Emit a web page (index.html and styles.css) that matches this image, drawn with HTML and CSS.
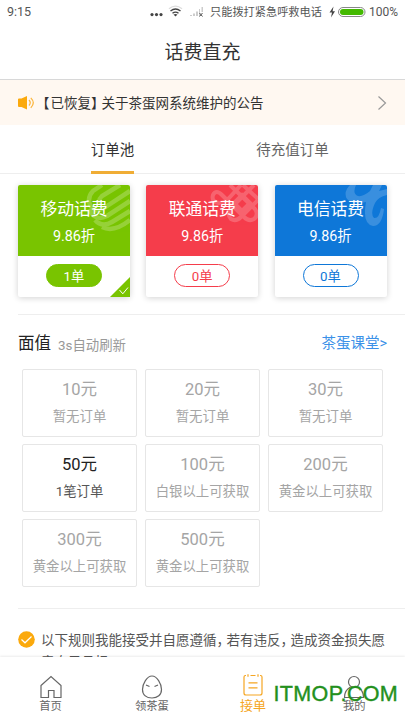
FILE: index.html
```html
<!DOCTYPE html>
<html lang="zh-CN">
<head>
<meta charset="utf-8">
<title>话费直充</title>
<link rel="stylesheet" href="styles.css">
</head>
<body>
<div class="app">
  <div class="status">
    <span class="time">9:15</span>
    <svg class="signals" width="62" height="16" viewBox="0 0 62 16">
      <g fill="#444"><circle cx="3" cy="10.6" r="1.6"/><circle cx="7.500" cy="10.6" r="1.6"/><circle cx="12" cy="10.6" r="1.6"/></g>
      <g fill="none" stroke-width="1.4"><path d="M20 4.800Q26.500 -.5 33 4.800" stroke="#ddd"/><path d="M21.500 7Q26.500 3 31.500 7M23.500 9.300Q26.500 7 29.500 9.300" stroke="#444"/></g>
      <path d="M24.500 10.500Q26.500 9.300 28.500 10.500L26.500 12.500Z" fill="#444"/>
      <g fill="#ccc"><path d="M41 12v-1h2v1zM44 12V9.500h2V12zM47 12V7.500h2V12zM50 12V5h1v7zM52.500 8V3H54v5z"/></g>
      <path d="M50.500 9l3 3.500m0-3.500l-3 3.500" stroke="#555"/>
    </svg>
    <span class="carrier">只能拨打紧急呼救电话</span>
    <svg class="battery" width="37" height="14" viewBox="0 0 37 14">
      <path d="M4.500 1.500L.5 7.500H3L2 12.500L6 6.200H3.600Z" fill="#444"/>
      <rect x="9.500" y="2.500" width="26.500" height="9" rx="4.500" fill="#fff" stroke="#888"/>
      <rect x="11" y="4" width="23.500" height="6" rx="3" fill="#43b900"/>
    </svg>
    <span class="percent">100%</span>
  </div>
  <h1 class="title">话费直充</h1>
  <div class="notice">
    <svg width="17" height="16" viewBox="0 0 17 16"><path d="M0 4.500Q0 3.500 1 3.500H3.500L9 1V14.500L3.500 12H1Q0 12 0 11z" fill="#fba90c"/><path d="M11 5q2.500 2.700 0 5.500M12.800 2.800q5 5 0 10" fill="none" stroke="#fbb43a" stroke-width="1.200"/></svg>
    <span class="notice-text"><span class="open">【</span>已恢复<span class="close">】</span>关于茶蛋网系统维护的公告</span>
    <svg width="10" height="16" viewBox="0 0 10 16"><path d="M1.500 1.500L8.500 8L1.500 14.500" fill="none" stroke="#999" stroke-width="1.200"/></svg>
  </div>
  <div class="tabs">
    <div class="tab active"><span>订单池</span></div>
    <div class="tab pending"><span>待充值订单</span></div>
  </div>
  <div class="carriers">
    <div class="card green selected">
      <div class="card-top">
        <svg class="logo" width="46" height="47" viewBox="0 0 46 47"><g fill="none" stroke="#fff" opacity=".22" stroke-width="4.500"><path d="M18 0L9 6Q3 12 6 20Q11 29 20 23L46 6"/><path d="M36 0L18 11Q13 16 18 18"/><path d="M5 24Q11 37 23 31L46 16"/><path d="M11 35Q18 43 28 37L46 26"/><path d="M18 42Q30 48 46 35"/></g></svg>
        <div class="name">移动话费</div><div class="rate">9.86折</div>
      </div>
      <div class="card-bottom"><span class="pill">1单</span></div>
      <svg class="corner" width="20" height="20" viewBox="0 0 20 20"><path d="M20 0V20H0z" fill="#79c400"/><path d="M9.500 13l3.300 3.800L18 10.500" fill="none" stroke="#fff"/></svg>
    </div>
    <div class="card red">
      <div class="card-top">
        <svg class="logo" width="48" height="40" viewBox="0 0 48 40"><g fill="none" stroke="#fff" opacity=".2" stroke-width="4"><path d="M20 0L45 24Q49 30 44 34Q39 37 34 32L12 10Q6 4 3 10Q1 17 9 18Q15 18 20 12L31 0"/><path d="M44 0L20 24Q17 30 21 34Q26 37 31 32L48 15"/><path d="M33 0L48 14M24 18L32 26L40 18L32 10Z"/></g></svg>
        <div class="name">联通话费</div><div class="rate">9.86折</div>
      </div>
      <div class="card-bottom"><span class="pill">0单</span></div>
    </div>
    <div class="card blue">
      <div class="card-top">
        <svg class="logo" width="42" height="42" viewBox="0 0 42 42"><path d="M11 0Q7 9 13 11Q18 12 25 6L28 0H37L34 6L42 4V10Q33 12 30 18Q25 29 29 33Q34 34 36 23L39 24Q37 41 28 41Q17 39 21 17Q8 20 2 14Q-2 7 5 0Z" fill="#fff" fill-opacity=".18"/></svg>
        <div class="name">电信话费</div><div class="rate">9.86折</div>
      </div>
      <div class="card-bottom"><span class="pill">0单</span></div>
    </div>
  </div>
  <div class="section">
    <div class="section-head"><h2>面值</h2><span class="refresh">3s自动刷新</span><span class="class-link">茶蛋课堂&gt;</span></div>
    <div class="grid">
      <div class="value"><b>10元</b><span>暂无订单</span></div>
      <div class="value"><b>20元</b><span>暂无订单</span></div>
      <div class="value"><b>30元</b><span>暂无订单</span></div>
      <div class="value on"><b>50元</b><span>1笔订单</span></div>
      <div class="value"><b>100元</b><span>白银以上可获取</span></div>
      <div class="value"><b>200元</b><span>黄金以上可获取</span></div>
      <div class="value"><b>300元</b><span>黄金以上可获取</span></div>
      <div class="value"><b>500元</b><span>黄金以上可获取</span></div>
    </div>
  </div>
  <div class="rules">
    <svg width="17" height="17" viewBox="0 0 17 17"><circle cx="8.500" cy="8.500" r="8.300" fill="#fba90c"/><path d="M3.500 8.500l3.500 3.300L13.500 5.500" fill="none" stroke="#fff" stroke-width="1.200"/></svg>
    <p>以下规则我能接受并自愿遵循<span class="comma">，</span>若有违反<span class="comma">，</span>造成资金损失愿<br>意自己承担</p>
  </div>
  <nav class="nav">
    <div class="item"><svg width="24" height="24" viewBox="0 0 24 24"><path d="M2 10.500L12 1.500L22 10.500V22.500H15V15.500H9.500V22.500H2Z"/></svg><span>首页</span></div>
    <div class="item"><svg width="24" height="24" viewBox="0 0 24 24"><path d="M12 1C7 1 2.500 9 2.500 14.500C2.500 20 6.500 23 12 23S21.500 20 21.500 14.500C21.500 9 17 1 12 1ZM6 10l3.500 1.500M18 10l-3.500 1.500"/></svg><span>领茶蛋</span></div>
    <div class="item current"><svg width="24" height="24" viewBox="0 0 24 24"><path d="M5 2.500H4.500Q3 2.500 3 4V20Q3 22 5 22H19Q21 22 21 20V4Q21 2.500 19.500 2.500H19M9.500 2.500H14.500M7.500 9.800H16.500M7.500 14.800H16.500M7 1.200v2.600M17 1.200v2.600"/></svg><span>接单</span></div>
    <div class="item"><svg width="24" height="24" viewBox="0 0 24 24"><circle cx="12" cy="7" r="5.500"/><path d="M8.500 12Q2.500 15 2.500 22.500H21.500Q21.500 15 15.500 12"/></svg><span>我的</span></div>
    <div class="watermark">ITMOP.COM</div>
  </nav>
</div>
</body>
</html>
```
FILE: styles.css
```css
* { box-sizing: border-box; }
body { margin: 0; background: #fff; font-family: Roboto, "Noto Sans CJK SC", sans-serif; color: #333; }
.app { width: 405px; height: 720px; overflow: hidden; display: flex; flex-direction: column; position: relative; }
.app > * { flex-shrink: 0; }
svg { display: block; flex-shrink: 0; }
.status { height: 24px; display: flex; align-items: center; padding-left: 7px; color: #555; white-space: nowrap; }
.time { width: 142px; font-size: 12.500px; }
.carrier { width: 119px; font-size: 11.200px; margin-left: -1px; margin-top: -2px; }
.time { margin-top: -1px; }
.battery { margin: -1px 3px 0 0; }
.percent { font-size: 12px; }
.title { margin: 0; height: 56px; line-height: 57px; border-bottom: 1px solid #d8d8d8; text-align: center; font-size: 19px; font-weight: 400; }
.notice { height: 45px; background: #fff8f1; display: flex; align-items: center; padding: 0 18px; }
.notice-text { flex: 1; font-size: 13.500px; margin: -2px 0 0 1px; }
.open { margin-right: 1px; }
.close { margin-right: -3px; }
.tabs { height: 49px; border-bottom: 1px solid #eee; display: flex; font-size: 14.500px; }
.tab { width: 225px; display: flex; justify-content: center; line-height: 51px; }
.tab span { height: 49px; }
.tab.active span { border-bottom: 3px solid #f0ad35; }
.tab.pending { width: 135px; color: #666; }
.carriers { display: flex; gap: 16.250px; padding: 11px 18px 0; height: 140px; }
.card { width: 112px; height: 112px; border-radius: 2px; position: relative; box-shadow: 0 1px 6px rgba(0,0,0,.18); }
.card-top { height: 70.500px; border-radius: 2px 2px 0 0; color: #fff; text-align: center; background: var(--c); position: relative; padding-top: 11px; overflow: hidden; }
.green { --c: #79c400; }
.red { --c: #f53d4b; }
.blue { --c: #0e77d8; }
.logo { position: absolute; right: 0; top: 0; }
.name { font-size: 16.800px; line-height: 26px; position: relative; }
.rate { font-size: 14.300px; line-height: 29px; position: relative; }
.card-bottom { display: flex; justify-content: center; padding-top: 8.500px; }
.pill { width: 56px; height: 23px; border: 1px solid var(--c); border-radius: 12px; color: var(--c); text-align: center; font-size: 13.300px; line-height: 23px; }
.selected .pill { background: var(--c); color: #fff; }
.corner { position: absolute; right: 0; bottom: 0; }
.section { margin-left: 18px; border-top: 1px solid #eee; height: 294px; }
.section-head { display: flex; align-items: baseline; height: 54px; padding: 17px 18px 0 0; }
h2 { margin: 0; font-size: 16.500px; font-weight: 400; line-height: 24px; color: #222; }
.refresh { font-size: 13.400px; color: #999; margin-left: 7px; position: relative; top: 1px; }
.class-link { margin-left: auto; font-size: 14.500px; color: #3b91e8; position: relative; top: -1px; }
.grid { display: grid; grid-template-columns: repeat(3, 115px); gap: 7px 8px; padding-left: 4px; }
.value { height: 68px; border: 1px solid #e6e6e6; border-radius: 2px; text-align: center; color: #a5a5a5; padding-top: 8px; }
.value b { display: block; font-size: 16.500px; line-height: 24px; font-weight: 400; }
.value span { display: block; font-size: 13.400px; line-height: 30px; white-space: nowrap; }
.value.on b { color: #222; }
.value.on span { color: #555; }
.rules { display: flex; height: 49px; overflow: hidden; margin-left: 18px; border-top: 1px solid #eee; padding-top: 23px; color: #555; }
.rules svg { margin-top: -1px; }
.rules p { margin: -3px 0 0 6px; font-size: 13.500px; line-height: 22px; white-space: nowrap; }
.comma { margin-right: -3.500px; }
.nav { height: 63px; background: #fff; box-shadow: 0 -1px 2px rgba(0,0,0,.08); display: flex; position: relative; color: #666; }
.item { width: 101.250px; padding-top: 18px; display: flex; flex-direction: column; align-items: center; font-size: 11.300px; line-height: 16px; }
.item svg { fill: none; stroke: #666; stroke-width: 1.200; }
.current { color: #f5a623; font-size: 13px; padding-top: 16px; line-height: 18px; }
.current svg { stroke: #f5a623; }
.watermark { position: absolute; left: 273.500px; top: 25px; font: 21.500px/25px "Liberation Sans", sans-serif; letter-spacing: .35px; color: #23901c; -webkit-text-stroke: .4px #23901c; }
```
